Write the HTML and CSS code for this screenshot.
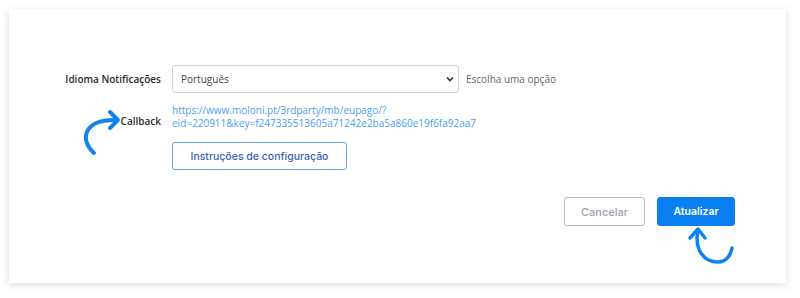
FILE: index.html
```html
<!DOCTYPE html>
<html lang="pt">
<head>
<meta charset="utf-8">
<link rel="stylesheet" href="styles.css">
</head>
<body>
<div class="page">
  <div class="card">
    <div class="form">
      <label class="label label-mid">Idioma Notificações</label>
      <div class="field">
        <div class="select">
          <span>Português</span>
          <svg class="chev" width="8" height="6" viewBox="0 0 8 6"><path d="M1 1.5 L4 4.5 L7 1.5" fill="none" stroke="#333" stroke-width="1.6"/></svg>
        </div>
        <span class="hint">Escolha uma opção</span>
      </div>

      <label class="label label-cb">Callback</label>
      <div class="field-col">
        <a class="link">https://www.moloni.pt/3rdparty/mb/eupago/?<br>eid=220911&amp;key=f247335513605a71242e2ba5a860e19f6fa92aa7</a>
        <button class="btn btn-outline">Instruções de configuração</button>
      </div>
    </div>

    <div class="actions">
      <button class="btn btn-cancel">Cancelar</button>
      <button class="btn btn-primary">Atualizar</button>
    </div>
  </div>

  <svg class="arrow arrow-left" width="60" height="60" viewBox="0 0 60 60">
    <path d="M22 46 C8 34, 10 12, 45 13" fill="none" stroke="#1183ee" stroke-width="4" stroke-linecap="round"/>
    <path d="M38 5 L46 13 L38 21" fill="none" stroke="#1183ee" stroke-width="4" stroke-linecap="round" stroke-linejoin="round"/>
  </svg>
  <svg class="arrow arrow-right" width="60" height="60" viewBox="0 0 60 60">
    <path d="M18 10 C14 30, 24 42, 38 42 C46 42, 51 35, 52 28" fill="none" stroke="#1183ee" stroke-width="3.5" stroke-linecap="round"/>
    <path d="M10 18 L18 9 L25 18" fill="none" stroke="#1183ee" stroke-width="3.5" stroke-linecap="round" stroke-linejoin="round"/>
  </svg>
</div>
</body>
</html>
```
FILE: styles.css
```css
html, body {
  margin: 0;
  padding: 0;
  background: #fff;
}
.page {
  position: relative;
  width: 800px;
  height: 298px;
  padding: 9px 0 0 9px;
  box-sizing: border-box;
  font-family: "Open Sans", "Noto Sans", sans-serif;
}
.card {
  width: 777px;
  height: 274px;
  box-sizing: border-box;
  background: #fff;
  box-shadow: 0 2px 8px rgba(60, 70, 100, 0.18);
  padding: 56px 51px 0 0;
  display: flex;
  flex-direction: column;
}
.form {
  display: grid;
  grid-template-columns: 152px 1fr;
  column-gap: 11px;
  row-gap: 12px;
}
.label {
  text-align: right;
  font-size: 10px;
  font-weight: 600;
  color: #2b2b2b;
}
.label-mid {
  align-self: center;
}
.label-cb {
  padding-top: 9px;
}
.field {
  display: flex;
  align-items: center;
  gap: 7px;
}
.select {
  width: 287px;
  height: 28px;
  box-sizing: border-box;
  border: 1px solid #cdd2d8;
  border-radius: 3px;
  display: flex;
  align-items: center;
  justify-content: space-between;
  padding: 0 4px 0 8px;
  font-size: 10px;
  color: #444;
}
.hint {
  font-size: 10px;
  color: #666;
}
.field-col {
  display: flex;
  flex-direction: column;
  align-items: flex-start;
  gap: 12px;
}
.link {
  font-size: 10px;
  line-height: 13px;
  color: #4a9ff0;
  margin-top: -1px;
}
.btn {
  font-family: "Inter", "Lato", sans-serif;
  font-size: 10.5px;
  height: 28px;
  border-radius: 3px;
  box-sizing: border-box;
  padding: 0;
  cursor: pointer;
}
.btn-outline {
  width: 175px;
  background: #fff;
  border: 1px solid #5aa8f0;
  color: #3c62b5;
  font-weight: 500;
}
.actions {
  display: flex;
  justify-content: flex-end;
  gap: 12px;
  margin-top: 27px;
}
.btn-cancel {
  width: 81px;
  height: 29px;
  background: #fff;
  border: 1px solid #b4bccb;
  color: #9aa3b3;
  font-size: 11px;
  font-weight: 500;
}
.btn-primary {
  width: 78px;
  height: 29px;
  background: #0a80f0;
  border: 1px solid #0a80f0;
  color: #fff;
  font-size: 10.5px;
  font-weight: 600;
}
.arrow {
  position: absolute;
}
.arrow-left {
  left: 72px;
  top: 107px;
}
.arrow-right {
  left: 680px;
  top: 220px;
}
```
